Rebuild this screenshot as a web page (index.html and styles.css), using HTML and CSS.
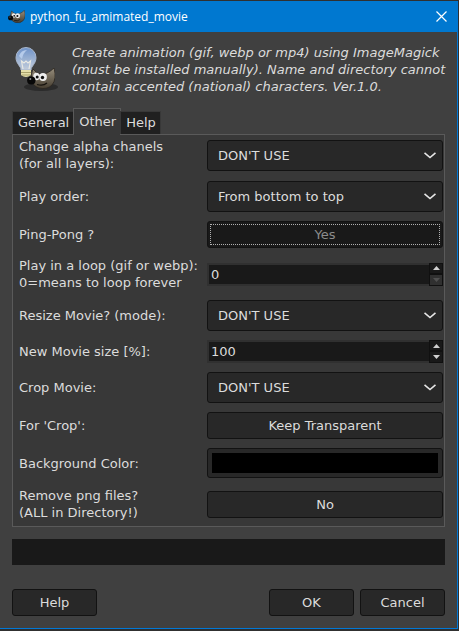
FILE: index.html
```
<!DOCTYPE html>
<html lang="en">
<head>
<meta charset="utf-8">
<title>python_fu_amimated_movie</title>
<link rel="stylesheet" href="styles.css">
</head>
<body>
<svg class="defs" aria-hidden="true">
  <defs>
    <linearGradient id="fur" x1="0" y1="0" x2="0" y2="1">
      <stop offset="0" stop-color="#968d7c"/>
      <stop offset="1" stop-color="#453d30"/>
    </linearGradient>
    <linearGradient id="glass" x1="0" y1="0" x2="0" y2="1">
      <stop offset="0" stop-color="#6f93c9"/>
      <stop offset="1" stop-color="#c3cddb"/>
    </linearGradient>
    <symbol id="wilber" viewBox="0 0 28 22">
      <path d="M6 1 L10 5 Q16 8 20 5 Q24 3 27 0 Q30 11 25 17 Q20 22 12 20 Q6 18 5 13 Q3 7 6 1Z" fill="url(#fur)" stroke="#2b261f" stroke-width="0.800"/>
      <ellipse cx="9.500" cy="8.500" rx="3.300" ry="3.800" fill="#eee"/>
      <ellipse cx="16" cy="9" rx="3.900" ry="4" fill="#eee"/>
      <circle cx="10.200" cy="9" r="1.500" fill="#111"/>
      <circle cx="15.500" cy="9.500" r="1.700" fill="#111"/>
      <path d="M10 16.500 Q16 18.500 20 15" fill="none" stroke="#16120d" stroke-width="1.200"/>
      <ellipse cx="4.300" cy="12.500" rx="4.200" ry="4" fill="#080808"/>
      <circle cx="3.300" cy="11" r="1" fill="#888"/>
    </symbol>
    <symbol id="chevron" viewBox="0 0 12 7">
      <path d="M0.500 0.800 L6 5.500 L11.500 0.800" fill="none" stroke="#e6e6e6" stroke-width="1.600"/>
    </symbol>
  </defs>
</svg>
<div class="window">
  <header class="titlebar">
    <svg class="app-icon" aria-hidden="true"><use href="#wilber"/></svg>
    <h1 class="title">python_fu_amimated_movie</h1>
    <button class="close" type="button" aria-label="Close">
      <svg viewBox="0 0 11 11" width="11" height="11"><path d="M0.500 0.500 L10.500 10.500 M10.500 0.500 L0.500 10.500" stroke="#fff" stroke-width="1.200"/></svg>
    </button>
  </header>
  <main class="content">
    <section class="intro">
      <svg class="intro-icon" viewBox="0 0 48 48" aria-hidden="true">
        <ellipse cx="29" cy="41" rx="17" ry="4" fill="#2b2b2b"/>
        <path d="M9 24 C9 20 4 18 4 11.500 A10 10 0 0 1 24 11.500 C24 18 19 20 19 24Z" fill="url(#glass)" stroke="#a9b7cc" stroke-width="1"/>
        <path d="M7 10 Q9 4 15 4 Q11 7 10 13Z" fill="#b6cbea"/>
        <path d="M11 23 L9.500 15 L12 17 L14 15 L16 17 L18.500 15 L17 23" fill="none" stroke="#e9e9e4" stroke-width="1.200"/>
        <path d="M9 24 H19 V29 Q14 33 9 29Z" fill="#e5dfaa"/>
        <path d="M9 26.500 H19 M9.500 29 H18.500" stroke="#aaa36c" stroke-width="1"/>
        <use href="#wilber" x="15" y="22" width="28" height="22"/>
      </svg>
      <p class="intro-text">Create animation (gif, webp or mp4) using ImageMagick (must be installed manually). Name and directory cannot contain accented (national) characters. Ver.1.0.</p>
    </section>
    <div class="tabs" role="tablist">
      <button class="tab" type="button" role="tab" aria-selected="false">General</button>
      <button class="tab tab-active" type="button" role="tab" aria-selected="true">Other</button>
      <button class="tab" type="button" role="tab" aria-selected="false">Help</button>
    </div>
    <form class="panel" id="options">
      <div class="row">
        <label for="alpha">Change alpha chanels<br>(for all layers):</label>
        <div class="combo"><select id="alpha"><option>DON'T USE</option></select><svg class="chevron" aria-hidden="true"><use href="#chevron"/></svg></div>
      </div>
      <div class="row">
        <label for="order">Play order:</label>
        <div class="combo"><select id="order"><option>From bottom to top</option></select><svg class="chevron" aria-hidden="true"><use href="#chevron"/></svg></div>
      </div>
      <div class="row">
        <label for="pingpong">Ping-Pong ?</label>
        <button class="button button-pressed" id="pingpong" type="button" aria-pressed="true"><span class="focus">Yes</span></button>
      </div>
      <div class="row">
        <label for="loop">Play in a loop (gif or webp):<br>0=means to loop forever</label>
        <div class="spin">
          <input id="loop" type="text" inputmode="numeric" value="0">
          <div class="steps">
            <button class="step" type="button" aria-label="Increase loop count"><svg viewBox="0 0 7 4"><path d="M0 4 L3.500 0 L7 4Z"/></svg></button>
            <button class="step step-off" type="button" aria-label="Decrease loop count" disabled><svg viewBox="0 0 7 4"><path d="M0 0 L3.500 4 L7 0Z"/></svg></button>
          </div>
        </div>
      </div>
      <div class="row">
        <label for="resize">Resize Movie? (mode):</label>
        <div class="combo"><select id="resize"><option>DON'T USE</option></select><svg class="chevron" aria-hidden="true"><use href="#chevron"/></svg></div>
      </div>
      <div class="row">
        <label for="size">New Movie size [%]:</label>
        <div class="spin">
          <input id="size" type="text" inputmode="numeric" value="100">
          <div class="steps">
            <button class="step" type="button" aria-label="Increase size"><svg viewBox="0 0 7 4"><path d="M0 4 L3.500 0 L7 4Z"/></svg></button>
            <button class="step" type="button" aria-label="Decrease size"><svg viewBox="0 0 7 4"><path d="M0 0 L3.500 4 L7 0Z"/></svg></button>
          </div>
        </div>
      </div>
      <div class="row">
        <label for="crop">Crop Movie:</label>
        <div class="combo"><select id="crop"><option>DON'T USE</option></select><svg class="chevron" aria-hidden="true"><use href="#chevron"/></svg></div>
      </div>
      <div class="row">
        <label for="forcrop">For 'Crop':</label>
        <button class="button" id="forcrop" type="button">Keep Transparent</button>
      </div>
      <div class="row">
        <label for="background">Background Color:</label>
        <button class="button color" id="background" type="button"><span class="swatch"></span></button>
      </div>
      <div class="row">
        <label for="remove">Remove png files?<br>(ALL in Directory!)</label>
        <button class="button" id="remove" type="button">No</button>
      </div>
    </form>
    <div class="progress" role="progressbar" aria-label="Progress"></div>
    <footer class="actions">
      <button class="button action action-help" type="button">Help</button>
      <button class="button action" type="button">OK</button>
      <button class="button action" type="button">Cancel</button>
    </footer>
  </main>
</div>
</body>
</html>
```
FILE: styles.css
```
* { box-sizing: border-box; }

body {
  margin: 0;
  min-height: 100vh;
  padding: 1px 1px 2px 0;
  background: #303030;
  color: #dcdcdc;
  font: 13px/17px "DejaVu Sans", sans-serif;
  display: flex;
}

button, input, select {
  font: inherit;
  color: inherit;
  margin: 0;
  padding: 0;
  border: 0;
  border-radius: 0;
  background: none;
}

.defs { position: absolute; width: 0; height: 0; }

.window {
  flex: 1;
  min-width: 0;
  display: flex;
  flex-direction: column;
  background: #404040;
  border: solid #0078d7;
  border-width: 0 1px 1px 0;
}

.titlebar {
  height: 31px;
  display: flex;
  align-items: center;
  gap: 5px;
  padding: 0 10px 0 8px;
  background: #0078d0;
}
.app-icon { width: 17px; height: 14px; }
.title {
  flex: 1;
  margin: 0;
  color: #fff;
  font: 12px/16px "Open Sans", sans-serif;
}
.close { display: flex; }

.content {
  flex: 1;
  display: flex;
  flex-direction: column;
  padding: 12px;
}

.intro { display: flex; gap: 12px; margin-right: -8px; }
.intro-icon { flex: none; width: 48px; height: 48px; margin-top: 2px; }
.intro-text { flex: 1; margin: 0; font-style: italic; }

.tabs {
  display: flex;
  align-items: flex-end;
  margin: 13px 0 -1px;
  position: relative;
}
.tab {
  height: 23px;
  margin-bottom: 1px;
  padding: 0 4px 1px 5px;
  background: #202020;
  border: solid #383838;
  border-width: 1px 1px 0;
}
.tab-active {
  height: 27px;
  margin: 0 -1px;
  padding-bottom: 2px;
  background: #383838;
  border-color: #5a5a5a;
}

.panel {
  display: flex;
  flex-direction: column;
  gap: 9px;
  padding: 3px 1px 5px 6px;
  background: #383838;
  border: 1px solid #5a5a5a;
}
.row {
  display: grid;
  grid-template-columns: 188px 1fr;
  align-items: center;
}

.combo { position: relative; display: flex; }
.combo select {
  flex: 1;
  height: 31px;
  padding: 0 30px 0 10px;
  appearance: none;
  background: #282828;
  border: 1px solid #121212;
  border-radius: 3px;
}
.chevron {
  position: absolute;
  right: 7px;
  top: 12px;
  width: 12px;
  height: 7px;
  pointer-events: none;
}

.button {
  height: 27px;
  background: #282828;
  border: 1px solid #121212;
  border-radius: 3px;
}
.button-pressed { display: flex; padding: 2px; background: #191919; color: #8c8c8c; }
.focus { flex: 1; border: 1px dotted #b0b0b0; line-height: 19px; }

.spin { display: flex; height: 23px; }
.spin input {
  flex: 1;
  min-width: 0;
  padding: 0 2px;
  background: #191919;
  border: solid #303030;
  border-width: 2px 0 2px 2px;
}
.steps { flex: none; width: 14px; display: grid; grid-template-rows: 11px 12px; }
.step {
  display: flex;
  align-items: center;
  justify-content: center;
  background: #191919;
  border: 1px solid #101010;
}
.step svg { width: 7px; height: 4px; fill: #d0d0d0; }
.step-off { background: #303030; }
.step-off svg { fill: #505050; }

.color { height: 30px; display: flex; padding: 4px; }
.swatch { flex: 1; align-self: stretch; background: #000; }

.progress { height: 26px; margin-top: 12px; background: #191919; }

.actions { display: flex; gap: 6px; margin-top: 24px; }
.action { width: 85px; }
.action-help { margin-right: auto; }
```
